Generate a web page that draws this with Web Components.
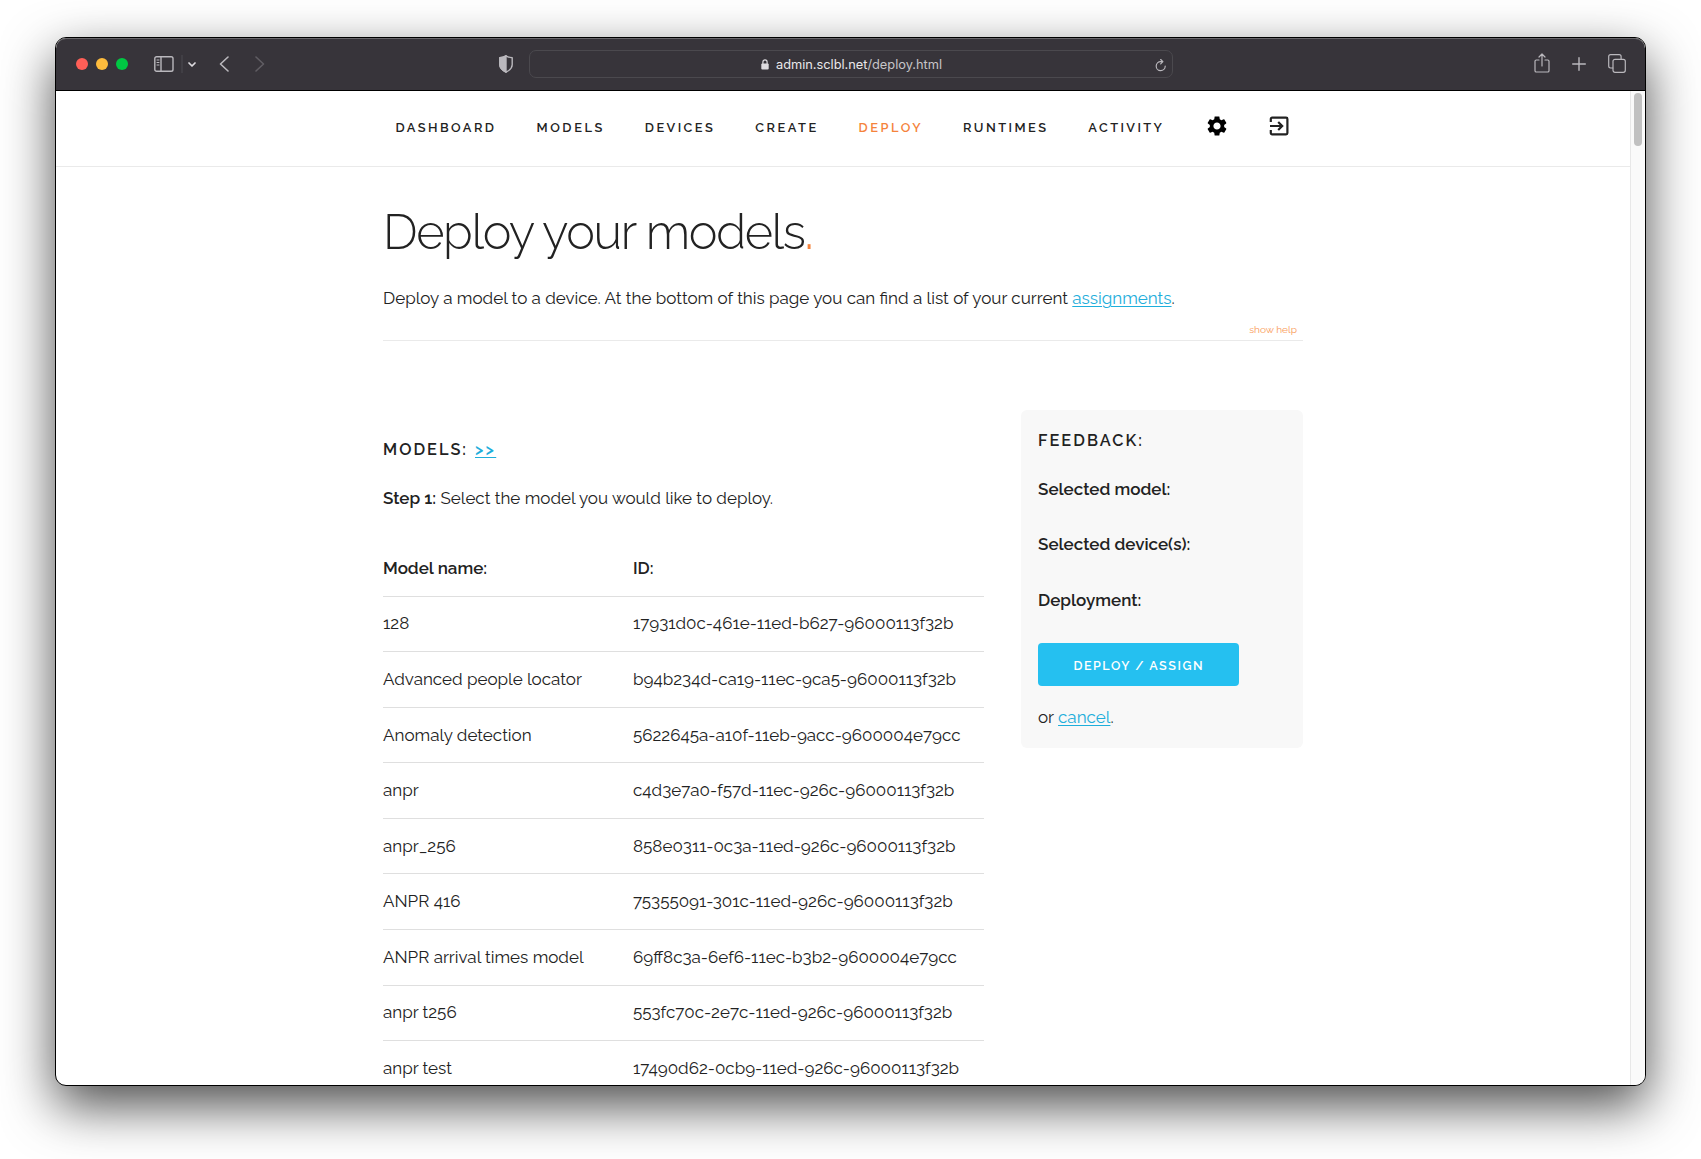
<!DOCTYPE html>
<html lang="en">
<head>
<meta charset="utf-8">
<title>Deploy your models</title>
<style>
html,body{margin:0;height:100%;background:#fff;overflow:hidden}
body{font-family:Raleway,Lato,"Open Sans",sans-serif;font-size:17px;line-height:28px;color:#222}
body{box-sizing:border-box;padding:37px 55px 73px}
</style>
</head>
<body>
<browser-window>
  <browser-toolbar slot="toolbar"></browser-toolbar>
  <site-nav></site-nav>
  <page-intro></page-intro>
  <deploy-area>
    <model-table></model-table>
    <feedback-card slot="side"></feedback-card>
  </deploy-area>
</browser-window>
<script>
function component(name, markup) {
  const t = document.createElement('template');
  t.innerHTML = markup;
  customElements.define(name, class extends HTMLElement {
    constructor() {
      super();
      this.attachShadow({mode: 'open'}).append(t.content.cloneNode(true));
    }
  });
}
const link = 'a{color:#1eaedb;text-decoration:underline;text-decoration-thickness:1px;text-underline-offset:2px}';

component('browser-window', `
<style>
:host{display:flex;flex-direction:column;box-sizing:border-box;width:1591px;height:1049px;border:1px solid #000;border-radius:11px;overflow:hidden;background:#fff;box-shadow:0 20px 52px rgba(0,0,0,.7)}
.view{flex:1;min-height:0;display:flex}
.page{flex:1;min-width:0;overflow:hidden}
.bar{box-sizing:border-box;width:15px;border-left:1px solid #e8e8e8;background:#fafafa;padding:2px 2px 0 3px}
.thumb{width:8px;height:53px;border-radius:4px;background:#c1c1c1}
</style>
<slot name="toolbar"></slot>
<div class="view"><div class="page"><slot></slot></div><div class="bar"><div class="thumb"></div></div></div>`);

component('browser-toolbar', `
<style>
:host{display:flex;align-items:center;box-sizing:border-box;height:53px;background:#37343a;border-bottom:1px solid #000;box-shadow:inset 0 1px #69676b;padding:0 19px 0 20px;font-family:Inter,sans-serif;font-size:12.800px;line-height:16px;border-radius:10px 10px 0 0}
svg{display:block;fill:none;stroke:#bab8bd;stroke-width:1.4;stroke-linecap:round;stroke-linejoin:round;flex:none}
.dots{display:flex;gap:8px}
.dots i{width:12px;height:12px;border-radius:50%}
.field{box-sizing:border-box;width:644px;height:28px;border:1px solid #4b494e;border-radius:7px;display:flex;align-items:center;margin-left:16px;padding:0 5px 0 230.500px;color:#e9e8ea;margin-top:-1px}
.field span{color:#c6c5c8}
.field fit-text{margin:3px 0 0 7.500px}
</style>
<div class="dots"><i style="background:#ff5f57"></i><i style="background:#febc3d"></i><i style="background:#00c843"></i></div>
<svg width="20" height="16" viewBox="0 0 20 16" style="margin-left:25.500px"><rect x=".8" y=".8" width="18.2" height="14.4" rx="1.8"/><path d="M7 1v14"/><path d="M3 4h2M3 6.5h2M3 9h2" stroke-width="1"/></svg>
<svg width="2" height="18" viewBox="0 0 2 18" style="margin-left:7px"><path d="M1 0v18" stroke="#4d4a50" stroke-width="1"/></svg>
<svg width="8" height="5" viewBox="0 0 8 5" style="margin-left:5px"><path d="M1 1l3 3 3-3" stroke="#dddbdf" stroke-width="1.7"/></svg>
<svg width="10" height="16" viewBox="0 0 10 16" style="margin-left:23.500px"><path d="M9 1L1.500 8 9 15" stroke-width="1.600"/></svg>
<svg width="10" height="16" viewBox="0 0 10 16" style="margin-left:26px"><path d="M1 1l7.500 7L1 15" stroke="#605d63" stroke-width="1.600"/></svg>
<svg width="14" height="18" viewBox="0 0 14 18" style="margin-left:234px"><path d="M7 .8c2 1.300 4 1.800 6.200 2v7c0 3.200-3 5.700-6.200 7.400C3.800 15.500.8 13 .8 9.800v-7C3 2.600 5 2.100 7 .8z"/><path d="M7 .8C5 2.100 3 2.600.8 2.800v7c0 3.200 3 5.700 6.200 7.400z" fill="#bab8bd"/></svg>
<div class="field">
<svg width="8" height="11" viewBox="0 0 8 11" style="margin-top:2px"><rect x=".3" y="4.600" width="7.400" height="6" rx="1" fill="#dddbdf" stroke="none"/><path d="M1.900 5V3a2.100 2.100 0 0 1 4.200 0v2" stroke="#dddbdf" stroke-width="1.200"/></svg>
<fit-text w="166">admin.sclbl.net<span>/deploy.html</span></fit-text>
<svg width="12" height="13" viewBox="0 0 12 13" style="margin:3px 0 0 auto"><path d="M10.200 7.200a4.500 4.500 0 1 1-4.500-4.600h1.600M5.700.5l2.200 2.100-2.200 2.300" stroke-width="1.200"/></svg>
</div>
<svg width="16" height="20" viewBox="0 0 16 20" style="margin-left:auto;margin-top:-2px"><path d="M5 7H2.300A1.300 1.300 0 0 0 1 8.300v9.400A1.300 1.300 0 0 0 2.300 19h11.400a1.300 1.300 0 0 0 1.300-1.300V8.300A1.300 1.300 0 0 0 13.700 7H11M8 13V1.200M5 4l3-3 3 3" stroke-width="1.200"/></svg>
<svg width="14" height="14" viewBox="0 0 14 14" style="margin-left:22px"><path d="M.7 7h12.600M7 .7v12.600"/></svg>
<svg width="18" height="19" viewBox="0 0 18 19" style="margin-left:22px;margin-top:-2px"><rect x="5" y="5.300" width="12.300" height="13" rx="2" stroke-width="1.200"/><path d="M4.800 14H2.600a1.900 1.900 0 0 1-1.900-1.900V2.600A1.900 1.900 0 0 1 2.600.7h8.600a1.900 1.900 0 0 1 1.900 1.900v2.500" stroke-width="1.200"/></svg>`);

component('site-nav', `
<style>
:host{display:flex;box-sizing:border-box;height:76px;border-bottom:1px solid #eaeaea;padding:22px 0 0 339.500px;font-size:12.800px;font-weight:600}
nav{display:flex;gap:42.400px}
fit-text{margin-top:1px}
.on{color:#f5833c}
svg{display:block;margin-top:.500px}
</style>
<nav><fit-text w="98.500">DASHBOARD</fit-text><fit-text w="66">MODELS</fit-text><fit-text w="68">DEVICES</fit-text><fit-text w="61">CREATE</fit-text><fit-text class="on" w="62">DEPLOY</fit-text><fit-text w="83">RUNTIMES</fit-text><fit-text w="73.600">ACTIVITY</fit-text>
<svg style="margin-left:.600px" width="24" height="24" viewBox="0 0 24 24" fill="#000"><path d="M19.140 12.940c.04-.3.06-.61.06-.94 0-.32-.02-.64-.07-.94l2.030-1.580c.18-.14.23-.41.12-.61l-1.920-3.320c-.12-.22-.37-.29-.59-.22l-2.390.96c-.5-.38-1.030-.7-1.620-.94l-.36-2.540c-.04-.24-.24-.41-.48-.41h-3.840c-.24 0-.43.17-.47.41l-.36 2.540c-.59.24-1.130.57-1.620.94l-2.390-.96c-.22-.08-.47 0-.59.22L2.740 8.870c-.12.21-.08.47.12.61l2.030 1.580c-.05.3-.09.63-.09.94s.02.64.07.94l-2.030 1.580c-.18.14-.23.41-.12.61l1.920 3.320c.12.22.37.29.59.22l2.390-.96c.5.38 1.030.7 1.620.94l.36 2.540c.05.24.24.41.48.41h3.840c.24 0 .44-.17.47-.41l.36-2.540c.59-.24 1.130-.56 1.620-.94l2.390.96c.22.08.47 0 .59-.22l1.920-3.320c.12-.22.07-.47-.12-.61l-2.010-1.580zM12 15.600c-1.980 0-3.600-1.620-3.600-3.600s1.620-3.600 3.600-3.600 3.600 1.620 3.600 3.600-1.620 3.600-3.600 3.600z"/></svg>
<svg style="margin-left:-4.500px" width="24" height="24" viewBox="0 0 24 24"><path d="M3.800 8V5A1.300 1.300 0 0 1 5.100 3.700h14A1.300 1.300 0 0 1 20.400 5v14a1.300 1.300 0 0 1-1.300 1.300h-14A1.300 1.300 0 0 1 3.800 19v-3M3 12h12M11.200 8l4 4-4 4" fill="none" stroke="#222" stroke-width="2.200"/></svg></nav>`);

component('page-intro', `
<style>
:host{display:block;box-sizing:border-box;width:920px;margin-left:327px;border-bottom:1px solid #eaeaea;padding-top:36px;height:174px}
h1{margin:0;display:flex;font-size:48.500px;font-weight:300;line-height:58px}
h1 b{color:#f5833c;font-weight:400;margin-left:-1.500px}
p{margin:23px 0 0;white-space:pre;font-size:17.030px}
.help{font-size:10.100px;line-height:14px;color:#f99a58;text-align:right;padding:10.500px 6px 0 0}
${link}
</style>
<h1><fit-text w="423">Deploy your models</fit-text><b>.</b></h1>
<p>Deploy a model to a device. At the bottom of this page you can find a list of your current <a>assignments</a>.</p>
<div class="help">show help</div>`);

component('deploy-area', `
<style>
:host{display:flex;justify-content:space-between;align-items:flex-start;width:920px;margin:69px 0 0 327px}
</style>
<slot></slot><slot name="side"></slot>`);

component('model-row', `
<style>
:host{display:flex;align-items:center;box-sizing:border-box;height:55.560px;border-bottom:1px solid #dfdfdf;padding-bottom:1.200px}
.n{width:250px}
</style>
<div class="n"><slot name="name"></slot></div><slot></slot>`);

const rows = [
  ['128', '17931d0c-461e-11ed-b627-96000113f32b'],
  ['Advanced people locator', 'b94b234d-ca19-11ec-9ca5-96000113f32b'],
  ['Anomaly detection', '5622645a-a10f-11eb-9acc-9600004e79cc'],
  ['anpr', 'c4d3e7a0-f57d-11ec-926c-96000113f32b'],
  ['anpr_256', '858e0311-0c3a-11ed-926c-96000113f32b'],
  ['ANPR 416', '75355091-301c-11ed-926c-96000113f32b'],
  ['ANPR arrival times model', '69ff8c3a-6ef6-11ec-b3b2-9600004e79cc'],
  ['anpr t256', '553fc70c-2e7c-11ed-926c-96000113f32b'],
  ['anpr test', '17490d62-0cb9-11ed-926c-96000113f32b']
];
component('model-table', `
<style>
:host{display:block;width:601px;padding-top:25.500px}
h2{margin:0;display:flex;font-size:16.300px;font-weight:600;line-height:28px}
p{margin:20px 0 29.700px}
b,.head{font-weight:600}
${link}
h2 a{margin-left:9px;letter-spacing:2.270px}
</style>
<h2><fit-text w="83">MODELS:</fit-text><a>&gt;&gt;</a></h2>
<p><b>Step 1:</b> Select the model you would like to deploy.</p>
<model-row class="head"><span slot="name">Model name:</span><span>ID:</span></model-row>
${rows.map(r => `<model-row><span slot="name">${r[0]}</span><span>${r[1]}</span></model-row>`).join('')}`);

component('feedback-card', `
<style>
:host{display:block;box-sizing:border-box;width:282px;height:338px;border-radius:6px;background:#f8f8f8;padding:16.500px 17px 0;font-weight:600}
h2{margin:0 0 20px;font-size:16.300px;font-weight:600;line-height:28px}
p{margin:0 0 27.500px}
button{display:flex;align-items:center;justify-content:center;box-sizing:border-box;width:201px;height:43px;border:0;border-radius:4px;background:#25c0f0;color:#fff;font:600 12.500px/20px Raleway,Lato,sans-serif;padding:3px 1px 0 0;margin:29px 0 17px}
.or{font-weight:400}
${link}
</style>
<h2><fit-text w="104">FEEDBACK:</fit-text></h2>
<p>Selected model:</p>
<p>Selected device(s):</p>
<p>Deployment:</p>
<button><fit-text w="129">DEPLOY / ASSIGN</fit-text></button>
<div class="or">or <a>cancel</a>.</div>`);

// Text run that spreads its letters evenly over the width given in "w".
customElements.define('fit-text', class extends HTMLElement {
  constructor() {
    super();
    this.attachShadow({mode: 'open'}).innerHTML =
      '<style>:host{display:block;white-space:nowrap;flex:none}span{display:inline-block}</style><span><slot></slot></span>';
  }
  connectedCallback() {
    const w = parseFloat(this.getAttribute('w'));
    const n = this.textContent.length;
    const run = this.shadowRoot.querySelector('span');
    const natural = run.getBoundingClientRect().width;
    run.style.letterSpacing = (w - natural) / Math.max(1, n - 1) + 'px';
    this.style.width = w + 'px';
  }
});
</script>
</body>
</html>
